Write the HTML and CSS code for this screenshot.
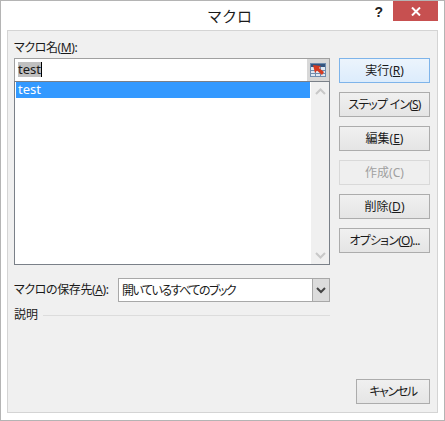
FILE: index.html
```html
<!doctype html>
<html lang="ja">
<head>
	<meta charset="UTF-8">
	<title>マクロ</title>
	<link rel="stylesheet" href="styles.css">
</head>
<body>
	<div class="dialog">
		<div class="titlebar">
			<span class="title">マクロ</span>
			<span class="help">?</span>
			<span class="close">
				<svg width="10" height="9" viewBox="0 0 10 9"><path d="M1 .5L9 8.500M9 .5L1 8.500" stroke="#fff" stroke-width="2" fill="none"/></svg>
			</span>
		</div>
		<div class="panel">
			<div class="main">
				<div class="left">
					<div class="label label_kana name_label">マクロ名(<u>M</u>):</div>
					<div class="name_row">
						<div class="name_input"><span class="selected">test</span><span class="caret"></span></div>
						<div class="ref_btn">
							<svg width="16" height="14" viewBox="0 0 16 14">
								<rect x="0.5" y="0.5" width="15" height="13" fill="#dfe8f2" stroke="#6f8cae"/>
								<rect x="1" y="1" width="14" height="3" fill="#34557f"/>
								<path d="M1 7.500H15M1 10.500H15M5.500 4V13M10.500 4V13" stroke="#6f8cae" fill="none"/>
								<path d="M3 2L11 3L9 5L14 9L12 12L7 7.500L5 10Z" fill="#d63a20"/>
							</svg>
						</div>
					</div>
					<div class="list_box">
						<div class="list">
							<div class="list_item">test</div>
						</div>
						<div class="scrollbar">
							<svg width="11" height="7" viewBox="0 0 11 7"><path d="M1 6L5.500 1.500L10 6" stroke="#c8c8c8" stroke-width="2" fill="none"/></svg>
							<svg width="11" height="7" viewBox="0 0 11 7"><path d="M1 1L5.500 5.500L10 1" stroke="#c8c8c8" stroke-width="2" fill="none"/></svg>
						</div>
					</div>
					<div class="store_row">
						<span class="label label_kana">マクロの保存先(<u>A</u>):</span>
						<div class="select">
							<span class="select_text">開いているすべてのブック</span>
							<span class="select_arrow">
								<svg width="10" height="7" viewBox="0 0 10 7"><path d="M1 1L5 5L9 1" stroke="#444" stroke-width="2" fill="none"/></svg>
							</span>
						</div>
					</div>
					<div class="desc_row">
						<span class="label">説明</span>
						<span class="desc_line"></span>
					</div>
				</div>
				<div class="buttons">
					<div class="btn btn_default">実行(<u>R</u>)</div>
					<div class="btn btn_kana">ステップ イン(<u>S</u>)</div>
					<div class="btn">編集(<u>E</u>)</div>
					<div class="btn btn_disabled">作成(C)</div>
					<div class="btn">削除(<u>D</u>)</div>
					<div class="btn btn_kana">オプション(<u>O</u>)...</div>
				</div>
			</div>
			<div class="bottom">
				<div class="btn btn_cancel">キャンセル</div>
			</div>
		</div>
	</div>
</body>
</html>
```

FILE: styles.css
```css
*,*::before,*::after{box-sizing:border-box;}
html,body{
	margin:0;padding:0;
	width:445px;
	height:421px;
	overflow:hidden;
}
body{
	font-family:"Noto Sans","Noto Sans CJK JP",sans-serif;
	font-feature-settings:"palt";
	font-size:12px;
	color:#1a1a1a;
}
u{text-underline-offset:1px;}

.dialog{
	width:445px;
	height:421px;
	background:#fff;
	border:1px solid #b4b4b4;
	padding:0 6px 7px 6px;
	display:flex;
	flex-direction:column;
}
.titlebar{
	height:29px;
	flex:none;
	display:flex;
	align-items:flex-start;
	position:relative;
}
.title{
	position:absolute;
	left:0;right:0;
	top:5px;
	text-align:center;
	font-size:15px;
	font-feature-settings:normal;
	line-height:20px;
	padding-left:14px;
}
.help{
	margin-left:auto;
	margin-right:10px;
	margin-top:2px;
	font-family:"Liberation Sans",sans-serif;
	font-weight:bold;
	font-size:14px;
	line-height:18px;
	color:#222;
}
.close{
	width:45px;
	height:20px;
	background:#c75050;
	display:flex;
	align-items:center;
	justify-content:center;
}

.panel{
	flex:1;
	background:#f0f0f0;
	border:1px solid #d4d4d4;
	padding:7px 7px 8px 6px;
	display:flex;
	flex-direction:column;
	justify-content:space-between;
}
.main{
	display:flex;
	gap:9px;
}
.left{
	width:316px;
	flex:none;
}
.label{
	line-height:20px;
	white-space:nowrap;
}
.label_kana{
	letter-spacing:-.4px;
}
.name_label{
	height:20px;
}

.name_row{
	display:flex;
	height:23px;
	border:1px solid #a0a0a0;
	border-bottom:0;
}
.name_input{
	flex:1;
	background:#fff;
	padding:3px 0 0 3px;
	display:flex;
	align-items:flex-start;
}
.selected{
	background:#c0c0c0;
	line-height:15px;
	font-size:13px;
}
.caret{
	width:1px;
	height:15px;
	background:#000;
}
.ref_btn{
	width:22px;
	background:#d8d8d8;
	display:flex;
	align-items:center;
	justify-content:center;
}

.list_box{
	height:184px;
	border:1px solid #7a8088;
	background:#fff;
	display:flex;
}
.list{
	flex:1;
	padding:0 1px;
}
.list_item{
	height:16px;
	background:#3399ff;
	color:#fff;
	font-size:13px;
	line-height:15px;
	padding-left:2px;
}
.scrollbar{
	width:18px;
	background:#f0f0f0;
	display:flex;
	flex-direction:column;
	justify-content:space-between;
	align-items:center;
	padding:6px 0 5px 0;
}

.store_row{
	display:flex;
	align-items:center;
	justify-content:space-between;
	margin-top:13px;
	height:24px;
}
.select{
	width:212px;
	height:24px;
	background:#fff;
	border:1px solid #a8a8a8;
	display:flex;
}
.select_text{
	flex:1;
	padding-left:3px;
	line-height:23px;
	letter-spacing:-1.5px;
}
.select_arrow{
	width:17px;
	background:#dcdcdc;
	border-left:1px solid #a8a8a8;
	display:flex;
	align-items:center;
	justify-content:center;
}
.desc_row{
	display:flex;
	align-items:center;
	gap:5px;
	margin-top:3px;
}
.desc_line{
	flex:1;
	height:1px;
	background:#dcdcdc;
}

.buttons{
	flex:1;
	display:flex;
	flex-direction:column;
	gap:9px;
	margin-top:20px;
}
.btn{
	height:25px;
	border:1px solid #acacac;
	background:linear-gradient(#f0f0f0,#e5e5e5);
	text-align:center;
	line-height:23px;
	white-space:nowrap;
}
.btn_kana{
	letter-spacing:-.8px;
}
.btn_default{
	border-color:#7eb4ea;
	background:linear-gradient(#ecf4fc,#dcecfc);
}
.btn_disabled{
	border-color:#d9d9d9;
	background:#efefef;
	color:#a0a0a0;
}
.bottom{
	display:flex;
	justify-content:flex-end;
}
.btn_cancel{
	width:74px;
	letter-spacing:-1.4px;
}
```
